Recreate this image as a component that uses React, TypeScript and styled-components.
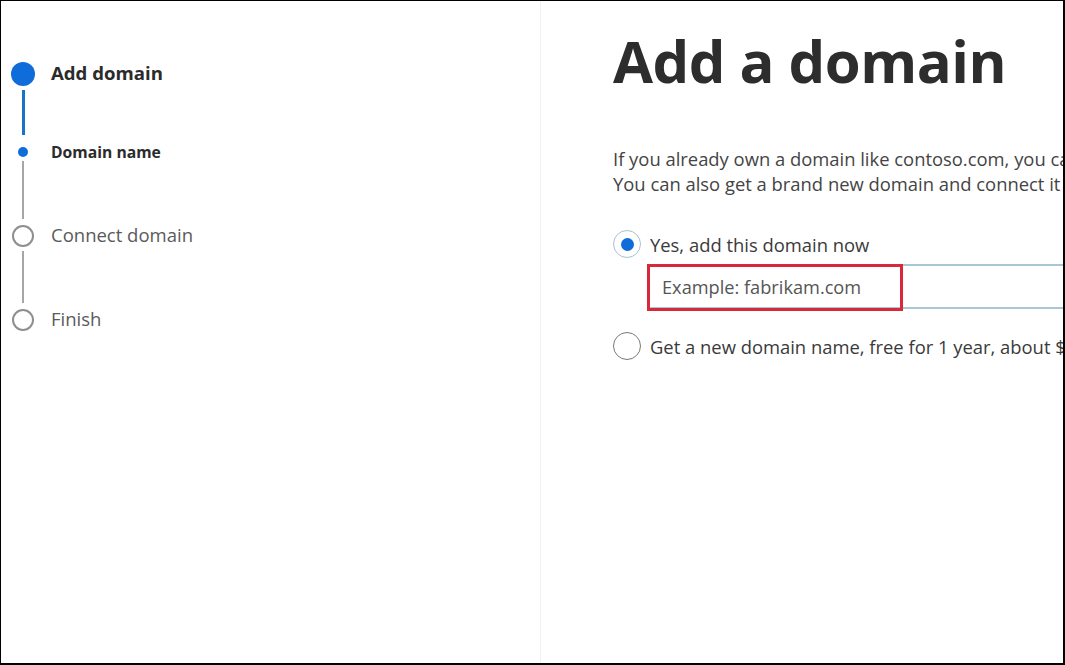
import React from "react";
import styled, { createGlobalStyle } from "styled-components";

const Global = createGlobalStyle`
  html, body { margin: 0; padding: 0; background: #fff; }
  body { font-family: "Open Sans", "Noto Sans", sans-serif; }
  * { box-sizing: border-box; }
`;

const Frame = styled.div`
  width: 1065px;
  height: 665px;
  border-left: 1px solid #000;
  border-top: 1px solid #000;
  border-right: 2px solid #000;
  border-bottom: 2px solid #000;
  display: flex;
  overflow: hidden;
  background: #fff;
`;

const Sidebar = styled.nav`
  width: 540px;
  flex: none;
  border-right: 1px solid #f1f1f1;
  padding: 60px 0 0 10px;
  display: flex;
  flex-direction: column;
`;

const Step = styled.div<{ $h: number }>`
  display: flex;
  align-items: flex-start;
  height: ${(p) => p.$h}px;
`;

const Track = styled.div`
  width: 24px;
  display: flex;
  flex-direction: column;
  align-items: center;
  align-self: stretch;
`;

const Dot = styled.div<{ $kind: "big" | "small" | "empty" }>`
  flex: none;
  border-radius: 50%;
  ${(p) =>
    p.$kind === "big"
      ? `width: 24px; height: 24px; background: #0f6cd8; margin-top: 1px;`
      : p.$kind === "small"
      ? `width: 10px; height: 10px; background: #0f6cd8; margin-top: 8px;`
      : `width: 22px; height: 22px; border: 2px solid #8f8f8f; background: #fff; margin-top: 2px;`}
`;

const Line = styled.div<{ $blue?: boolean; $top: number }>`
  width: ${(p) => (p.$blue ? 3 : 2)}px;
  background: ${(p) => (p.$blue ? "#1a73c8" : "#a6a6a6")};
  flex: 1;
  margin-top: ${(p) => p.$top}px;
  margin-bottom: 4px;
`;

const StepLabel = styled.span<{ $bold?: boolean; $size: number; $top: number }>`
  margin-left: 16px;
  margin-top: ${(p) => p.$top}px;
  font-size: ${(p) => p.$size}px;
  font-weight: ${(p) => (p.$bold ? 700 : 400)};
  color: ${(p) => (p.$bold ? "#2b2b2b" : "#5a5a5a")};
  line-height: 24px;
  white-space: nowrap;
`;

const Main = styled.main`
  flex: 1;
  padding: 24px 0 0 72px;
  overflow: hidden;
  white-space: nowrap;
`;

const Title = styled.h1`
  margin: 0;
  font-size: 58px;
  font-weight: 700;
  color: #2d2d2d;
  line-height: 72px;
  letter-spacing: -0.5px;
`;

const Intro = styled.p`
  margin: 49px 0 0;
  font-size: 18.4px;
  line-height: 25px;
  color: #444;
`;

const Option = styled.label`
  display: flex;
  align-items: center;
  gap: 9px;
  font-size: 18.4px;
  color: #3a3a3a;
  height: 28px;
`;

const Radio = styled.span<{ $checked?: boolean }>`
  width: 28px;
  height: 28px;
  border-radius: 50%;
  border: 1.5px solid ${(p) => (p.$checked ? "#a9c1cf" : "#7a7a7a")};
  display: flex;
  align-items: center;
  justify-content: center;
  flex: none;
  &::after {
    content: "";
    width: 13px;
    height: 13px;
    border-radius: 50%;
    background: ${(p) => (p.$checked ? "#0f6cd8" : "transparent")};
  }
`;

const FieldWrap = styled.div`
  position: relative;
  margin: 6px 0 0 34px;
  height: 45px;
  border-top: 2px solid #a9c7d3;
  border-bottom: 2px solid #a9c7d3;
  width: 600px;
`;

const Highlight = styled.div`
  position: absolute;
  left: 0;
  top: -2px;
  width: 256px;
  height: 47px;
  border: 3px solid #d8293b;
  pointer-events: none;
`;

const Input = styled.input`
  border: none;
  outline: none;
  background: transparent;
  width: 100%;
  height: 100%;
  padding: 0 0 0 15px;
  font-family: "Open Sans", "Noto Sans", sans-serif;
  font-size: 18.2px;
  color: #333;
  &::placeholder { color: #555; }
`;

const Options = styled.div`
  margin-top: 34px;
  display: flex;
  flex-direction: column;
`;

const SecondOption = styled(Option)`
  margin-top: 23px;
`;

export default function App() {
  return (
    <>
      <Global />
      <Frame>
        <Sidebar>
          <Step $h={78}>
            <Track>
              <Dot $kind="big" />
              <Line $blue $top={4} />
            </Track>
            <StepLabel $bold $size={18.6} $top={0}>Add domain</StepLabel>
          </Step>
          <Step $h={84}>
            <Track>
              <Dot $kind="small" />
              <Line $top={4} />
            </Track>
            <StepLabel $bold $size={15.7} $top={1}>Domain name</StepLabel>
          </Step>
          <Step $h={84}>
            <Track>
              <Dot $kind="empty" />
              <Line $top={4} />
            </Track>
            <StepLabel $size={18.5} $top={0}>Connect domain</StepLabel>
          </Step>
          <Step $h={40}>
            <Track>
              <Dot $kind="empty" />
            </Track>
            <StepLabel $size={18.5} $top={0}>Finish</StepLabel>
          </Step>
        </Sidebar>
        <Main>
          <Title>Add a domain</Title>
          <Intro>
            If you already own a domain like contoso.com, you can add it here and connect it to Microsoft 365.
            <br />
            You can also get a brand new domain and connect it later.
          </Intro>
          <Options>
            <Option>
              <Radio $checked />
              Yes, add this domain now
            </Option>
            <FieldWrap>
              <Input placeholder="Example: fabrikam.com" />
              <Highlight />
            </FieldWrap>
            <SecondOption>
              <Radio />
              Get a new domain name, free for 1 year, about $12 per year after that
            </SecondOption>
          </Options>
        </Main>
      </Frame>
    </>
  );
}
